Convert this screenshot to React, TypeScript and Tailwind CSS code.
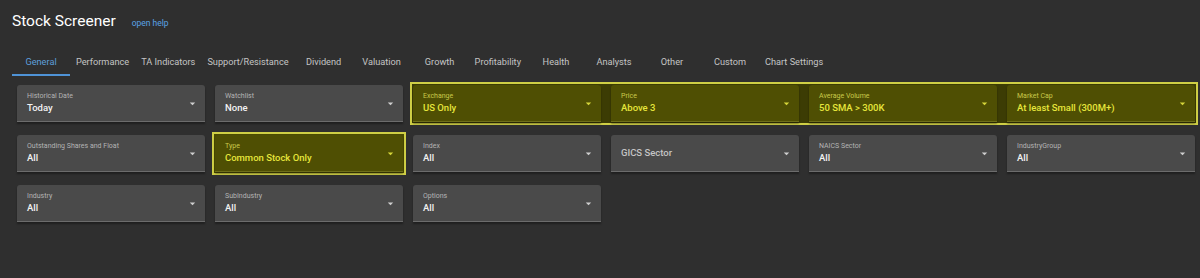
import React from "react";

type FieldProps = {
  label?: string;
  value?: string;
  placeholder?: string;
  hl?: boolean;
};

function Caret({ hl }: { hl?: boolean }) {
  return (
    <svg viewBox="0 0 24 24" className={`h-[13px] w-[13px] shrink-0 ${hl ? "fill-[#d6d63a]" : "fill-[#cfcfcf]"}`}>
      <path d="M7 10l5 5 5-5z" />
    </svg>
  );
}

function Field({ label, value, placeholder, hl }: FieldProps) {
  return (
    <div
      className={`flex h-[37px] items-center rounded-t-[3px] border-b pl-[10px] pr-[6px] shadow-[0_2px_2px_rgba(0,0,0,0.35)] ${
        hl ? "bg-[#4f4f03] border-[#6f6f1a]" : "bg-[#4a4a4a] border-[#6c6c6c]"
      }`}
    >
      {placeholder ? (
        <div className="flex-1 text-[9.5px] font-medium leading-[12px] text-[#c4c4c4]">{placeholder}</div>
      ) : (
        <div className="flex min-w-0 flex-1 flex-col self-start pt-[7px]">
          <div className={`text-[7px] leading-[8px] ${hl ? "text-[#c9c94a]" : "text-[#b4b4b4]"}`}>{label}</div>
          <div className={`mt-[2px] text-[9.5px] font-medium leading-[12px] ${hl ? "text-[#e6e63c]" : "text-[#f2f2f2]"}`}>
            {value}
          </div>
        </div>
      )}
      <Caret hl={hl} />
    </div>
  );
}

const tabs = [
  "General",
  "Performance",
  "TA Indicators",
  "Support/Resistance",
  "Dividend",
  "Valuation",
  "Growth",
  "Profitability",
  "Health",
  "Analysts",
  "Other",
  "Custom",
  "Chart Settings",
];

export default function App() {
  return (
    <div className="h-[278px] w-[1200px] overflow-hidden bg-[#2f2f2f] font-['Roboto',sans-serif]">
      <div className="flex items-baseline pl-[12px] pt-[11px]">
        <h1 className="text-[15.5px] leading-[20px] text-white">Stock Screener</h1>
        <span className="ml-[16px] text-[8.5px] text-[#5aa2e4]">open help</span>
      </div>
      <div className="mt-[16px] flex h-[29px] pl-[12px]">
        {tabs.map((t, i) => (
          <div
            key={t}
            className={`relative flex min-w-[58px] items-center justify-center px-[6px] text-[9.2px] font-normal ${
              i === 0 ? "text-[#5d9fdc]" : "text-[#c4c4c4]"
            }`}
          >
            {t}
            {i === 0 && <div className="absolute bottom-0 left-0 right-0 h-[2px] bg-[#4f93d6]" />}
          </div>
        ))}
      </div>
      <div className="mt-[9px] grid grid-cols-[repeat(6,188px)] gap-x-[10px] gap-y-[13px] pl-[17px]">
        <Field label="Historical Date" value="Today" />
        <Field label="Watchlist" value="None" />
        <div className="col-span-4 -m-[3px] border-2 border-[#cfcf45] bg-[#3c3c04] p-px">
          <div className="grid grid-cols-4 gap-x-[10px]">
            <Field hl label="Exchange" value="US Only" />
            <Field hl label="Price" value="Above 3" />
            <Field hl label="Average Volume" value="50 SMA > 300K" />
            <Field hl label="Market Cap" value="At least Small (300M+)" />
          </div>
        </div>

        <Field label="Outstanding Shares and Float" value="All" />
        <div className="-m-[3px] border-2 border-[#cfcf45] bg-[#4b4b02] p-px">
          <Field hl label="Type" value="Common Stock Only" />
        </div>
        <Field label="Index" value="All" />
        <Field placeholder="GICS Sector" />
        <Field label="NAICS Sector" value="All" />
        <Field label="IndustryGroup" value="All" />

        <Field label="Industry" value="All" />
        <Field label="SubIndustry" value="All" />
        <Field label="Options" value="All" />
      </div>
    </div>
  );
}
